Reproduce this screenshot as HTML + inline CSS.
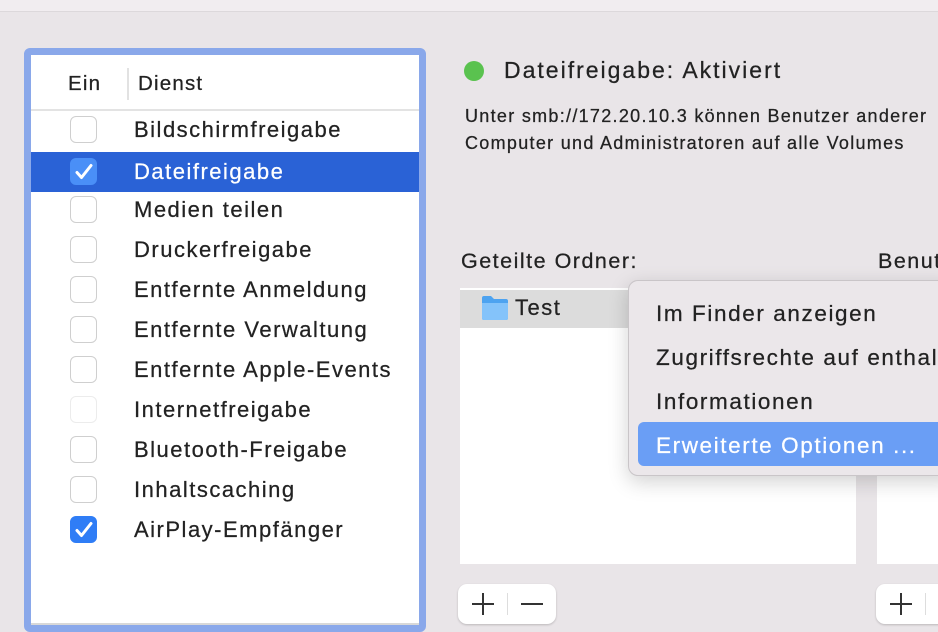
<!DOCTYPE html>
<html><head><meta charset="utf-8"><style>
*{margin:0;padding:0;box-sizing:border-box}
body{width:938px;height:632px;overflow:hidden;background:#e9e5e8;font-family:"Liberation Sans",sans-serif;color:#222;position:relative;-webkit-text-stroke:0.25px}
.abs{position:absolute;white-space:nowrap}
.top{position:absolute;left:0;top:0;width:938px;height:12px;background:#f1edf0;border-bottom:1px solid #dcd8db}
.list{position:absolute;left:24px;top:48px;width:402px;height:584px;border:7px solid #8aa8ea;border-radius:6px;background:#fff;overflow:hidden}
.row{position:absolute;left:0;width:388px;height:40px;font-size:22px;line-height:40px;letter-spacing:1.5px;white-space:nowrap}
.row span{position:absolute;left:103px}
.cb{position:absolute;left:39px;top:6px;width:27px;height:27px;border:1px solid #cfcfcf;border-radius:6px;background:#fff}
.cb.on{background:#2f7df6;border-color:#2f7df6}
.cb svg{position:absolute;left:3px;top:3px}
.sel{background:#2a62d6;color:#fff}
.sel .cb{background:#4a8ff7;border-color:#4a8ff7}
.menu{position:absolute;left:628px;top:280px;width:330px;height:196px;background:#ebe7ea;border:1px solid #c9c5c8;border-radius:10px;box-shadow:0 6px 20px rgba(0,0,0,.18);overflow:hidden}
.mi{position:absolute;left:27px;font-size:22.5px;line-height:44px;height:44px;white-space:nowrap;letter-spacing:1.6px}
.btn{position:absolute;top:584px;width:98px;height:40px;background:#fff;border-radius:9px;box-shadow:0 1px 2px rgba(0,0,0,.2)}
</style></head><body>
<div class="top"></div>
<div class="list">
  <div class="abs" style="left:37px;top:16px;font-size:20.5px;line-height:26px;letter-spacing:1.2px">Ein</div>
  <div class="abs" style="left:96px;top:13px;width:2px;height:32px;background:#e2e2e2"></div>
  <div class="abs" style="left:107px;top:16px;font-size:20.5px;line-height:26px;letter-spacing:1.2px">Dienst</div>
  <div class="abs" style="left:0;top:54px;width:388px;height:2px;background:#e3e3e3"></div>
  <div class="row" style="top:55px"><div class="cb"></div><span>Bildschirmfreigabe</span></div>
  <div class="row sel" style="top:97px"><div class="cb on"><svg width="20" height="20" viewBox="0 0 20 20"><path d="M3 10.5l4.5 5L17 3.5" stroke="#fff" stroke-width="3" fill="none" stroke-linecap="round" stroke-linejoin="round"/></svg></div><span>Dateifreigabe</span></div>
  <div class="row" style="top:135px"><div class="cb"></div><span>Medien teilen</span></div>
  <div class="row" style="top:175px"><div class="cb"></div><span>Druckerfreigabe</span></div>
  <div class="row" style="top:215px"><div class="cb"></div><span>Entfernte Anmeldung</span></div>
  <div class="row" style="top:255px"><div class="cb"></div><span>Entfernte Verwaltung</span></div>
  <div class="row" style="top:295px"><div class="cb"></div><span>Entfernte Apple-Events</span></div>
  <div class="row" style="top:335px"><div class="cb" style="border-color:#ececec"></div><span>Internetfreigabe</span></div>
  <div class="row" style="top:375px"><div class="cb"></div><span>Bluetooth-Freigabe</span></div>
  <div class="row" style="top:415px"><div class="cb"></div><span>Inhaltscaching</span></div>
  <div class="row" style="top:455px"><div class="cb on"><svg width="20" height="20" viewBox="0 0 20 20"><path d="M3 10.5l4.5 5L17 3.5" stroke="#fff" stroke-width="3" fill="none" stroke-linecap="round" stroke-linejoin="round"/></svg></div><span>AirPlay-Empfänger</span></div>
  <div class="abs" style="left:0;top:568px;width:388px;height:2px;background:#d8d8d8"></div>
</div>
<div class="abs" style="left:464px;top:61px;width:20px;height:20px;border-radius:50%;background:#5ac24f"></div>
<div class="abs" style="left:504px;top:56px;font-size:23px;line-height:28px;letter-spacing:2px">Dateifreigabe: Aktiviert</div>
<div class="abs" style="left:465px;top:103px;font-size:18px;line-height:27px;letter-spacing:1.3px">Unter smb://172.20.10.3 können Benutzer anderer<br>Computer und Administratoren auf alle Volumes</div>
<div class="abs" style="left:461px;top:248px;font-size:21.5px;line-height:26px;letter-spacing:1.5px">Geteilte Ordner:</div>
<div class="abs" style="left:878px;top:248px;font-size:21.5px;line-height:26px;letter-spacing:1.5px">Benutzer:</div>
<div class="abs" style="left:460px;top:288px;width:396px;height:276px;background:#fff"></div>
<div class="abs" style="left:460px;top:290px;width:396px;height:38px;background:#dcdcdc"></div>
<svg class="abs" style="left:481px;top:295px" width="28" height="26" viewBox="0 0 28 26"><path d="M1 3a2 2 0 0 1 2-2h7l3 3h12a2 2 0 0 1 2 2v17a2 2 0 0 1-2 2H3a2 2 0 0 1-2-2z" fill="#4da3f0"/><path d="M1 8h26v15a2 2 0 0 1-2 2H3a2 2 0 0 1-2-2z" fill="#84c3fa"/></svg>
<div class="abs" style="left:515px;top:294px;font-size:22px;line-height:28px;letter-spacing:1.5px">Test</div>
<div class="abs" style="left:877px;top:288px;width:61px;height:276px;background:#fff"></div>
<div class="menu">
  <div class="mi" style="top:11px">Im Finder anzeigen</div>
  <div class="mi" style="top:55px">Zugriffsrechte auf enthaltene Objekte</div>
  <div class="mi" style="top:99px">Informationen</div>
  <div class="abs" style="left:9px;top:141px;width:330px;height:44px;background:#6a9ef5;border-radius:6px"></div>
  <div class="mi" style="top:143px;color:#fff">Erweiterte Optionen ...</div>
</div>
<div class="btn" style="left:458px"><div class="abs" style="left:14px;top:19px;width:22px;height:2px;background:#333"></div><div class="abs" style="left:24px;top:9px;width:2px;height:22px;background:#333"></div><div class="abs" style="left:49px;top:9px;width:1px;height:22px;background:#ddd"></div><div class="abs" style="left:63px;top:19px;width:22px;height:2px;background:#333"></div></div>
<div class="btn" style="left:876px"><div class="abs" style="left:14px;top:19px;width:22px;height:2px;background:#333"></div><div class="abs" style="left:24px;top:9px;width:2px;height:22px;background:#333"></div><div class="abs" style="left:49px;top:9px;width:1px;height:22px;background:#ddd"></div></div>
</body></html>
